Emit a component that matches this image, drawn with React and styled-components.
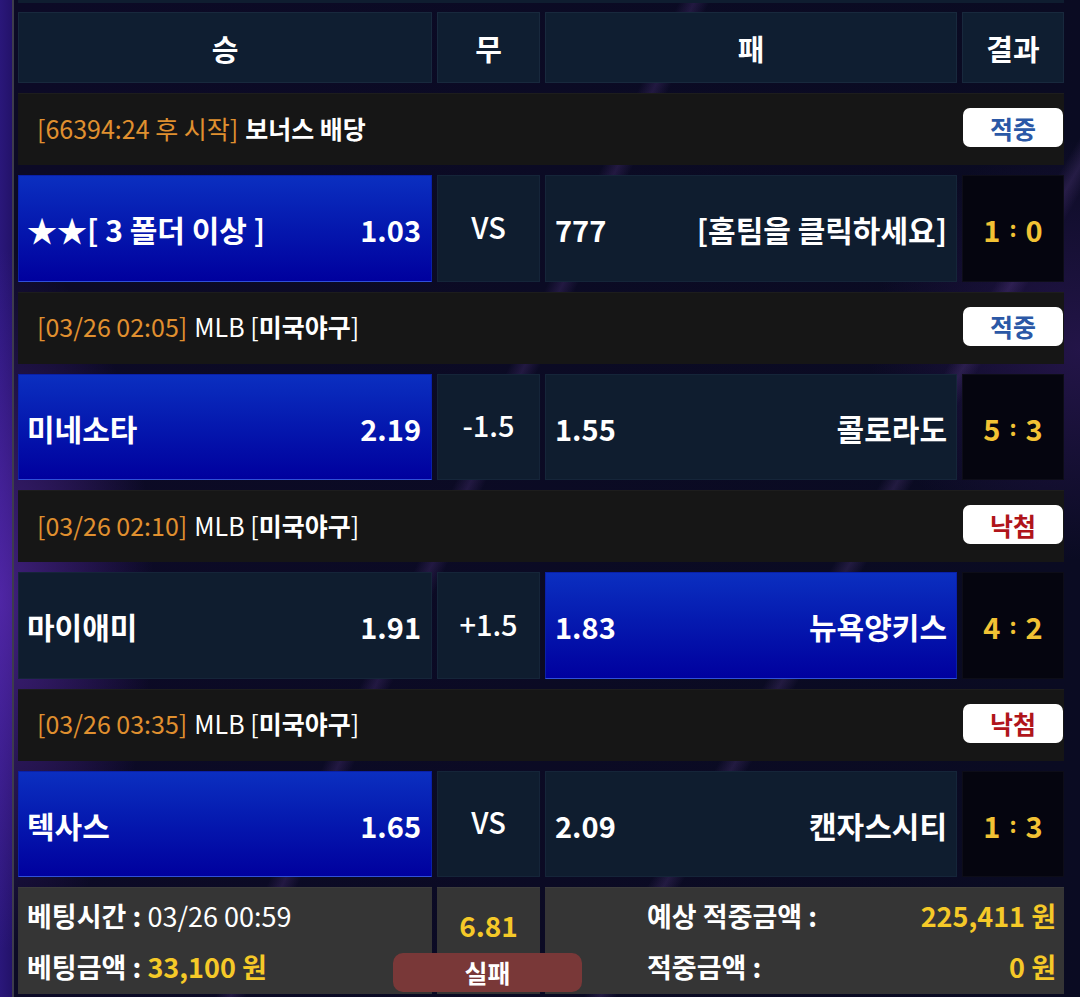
import React from "react";
import styled, { createGlobalStyle, css } from "styled-components";

const GlobalStyle = createGlobalStyle`
  html, body { margin: 0; padding: 0; background: #0a0a1e; }
  body { font-family: "Noto Sans CJK KR", "Noto Sans", sans-serif; }
  * { box-sizing: border-box; }
`;

const Page = styled.div`
  position: relative;
  width: 1080px;
  height: 997px;
  overflow: hidden;
  background:
    linear-gradient(115deg, transparent 0 44%, rgba(140, 90, 200, 0.18) 45%, transparent 46%),
    linear-gradient(120deg, transparent 0 70%, rgba(160, 110, 220, 0.16) 71%, transparent 72%),
    radial-gradient(ellipse 220px 500px at 0 600px, rgba(110, 50, 200, 0.55), transparent 70%),
    radial-gradient(ellipse 300px 300px at 1080px 350px, rgba(60, 30, 110, 0.5), transparent 70%),
    linear-gradient(to right, #2a177a 0, #23126a 12px, #0c0a26 12px, #0a0b22 100%);
`;

const Rail = styled.div`
  margin-left: 12px;
  border-left: 2px solid #3d3c4c;
  padding-left: 4px;
  width: 1052px;
  min-height: 997px;
  display: flex;
  flex-direction: column;
`;

const TopStrip = styled.div`
  height: 3px;
  background: #0f1d30;
  margin-bottom: 9px;
`;

const Table = styled.div`
  display: flex;
  flex-direction: column;
  gap: 10px;
`;

const Grid = styled.div`
  display: grid;
  grid-template-columns: 414px 103px 412px 102px;
  column-gap: 5px;
  height: ${(p) => p.$h}px;
`;

const HeadCell = styled.div`
  background: #0f1e31;
  border: 1px solid #18293d;
  display: flex;
  align-items: center;
  justify-content: center;
  color: #fff;
  font-weight: 700;
  font-size: 29px;
`;

const InfoRow = styled.div`
  height: 72px;
  background: #161616;
  border-top: 1px solid #1d1d1d;
  display: flex;
  align-items: center;
  justify-content: space-between;
  padding: 0 1px 4px 19px;
  font-size: 25px;
  color: #fff;
`;

const InfoText = styled.div`
  display: flex;
  align-items: center;
  gap: 7px;
  white-space: nowrap;
`;

const Orange = styled.span`
  color: #e0902f;
  font-weight: 400;
`;

const White = styled.span`
  color: #fff;
  font-weight: ${(p) => (p.$bold ? 700 : 400)};
`;

const Badge = styled.div`
  width: 100px;
  height: 39px;
  border-radius: 7px;
  background: #fff;
  display: flex;
  align-items: center;
  justify-content: center;
  font-weight: 700;
  font-size: 25px;
  color: ${(p) => (p.$win ? "#2b58a6" : "#b0151b")};
`;

const blueFill = css`
  background: linear-gradient(to bottom, #0b2fc0 0%, #051ab0 45%, #00009e 100%);
  border: 1px solid #0a20a8;
  border-bottom: 1px solid #3050d8;
`;

const navyFill = css`
  background: #0f1d2f;
  border: 1px solid #152539;
`;

const TeamCell = styled.div`
  ${(p) => (p.$picked ? blueFill : navyFill)}
  display: flex;
  align-items: center;
  justify-content: space-between;
  padding: 2px ${(p) => (p.$away ? 9 : 10)}px 0 ${(p) => (p.$away ? 9 : 8)}px;
  color: #fff;
  font-weight: 700;
  font-size: 30px;
  white-space: nowrap;
`;

const Odds = styled.span`
  font-weight: 600;
  font-size: 29px;
`;

const DrawCell = styled.div`
  ${navyFill}
  display: flex;
  align-items: center;
  justify-content: center;
  padding-bottom: 5px;
  color: #fff;
  font-weight: 500;
  font-size: 29px;
`;

const ScoreCell = styled.div`
  background: #05050f;
  border: 1px solid #0d0d18;
  display: flex;
  align-items: center;
  justify-content: center;
  padding-top: 2px;
  color: #f2c234;
  font-weight: 700;
  font-size: 29px;
  gap: 9px;
`;

const Colon = styled.span`
  font-size: 22px;
  font-weight: 700;
  position: relative;
  top: -2px;
`;

const Footer = styled.div`
  position: relative;
  display: grid;
  grid-template-columns: 414px 103px 412px 102px;
  column-gap: 5px;
  height: 107px;
`;

const Panel = styled.div`
  background: #353535;
  grid-column: ${(p) => p.$span || "auto"};
  border-top: 1px solid #3c3c3c;
`;

const LeftPanel = styled(Panel)`
  display: flex;
  flex-direction: column;
  justify-content: space-between;
  padding: 10px 0 9px 9px;
  font-size: 27px;
  color: #fff;
`;

const Line = styled.div`
  white-space: nowrap;
  line-height: 36px;
`;

const Label = styled.span`
  font-weight: 700;
`;

const Yellow = styled.span`
  color: #f5c928;
  font-weight: 700;
`;

const MidPanel = styled(Panel)`
  display: flex;
  justify-content: center;
  padding-top: 17px;
  font-size: 28px;
`;

const RightPanel = styled(Panel)`
  display: grid;
  grid-template-columns: 1fr auto;
  align-content: space-between;
  padding: 10px 8px 9px 102px;
  font-size: 27px;
  line-height: 36px;
  color: #fff;
`;

const RightValue = styled(Yellow)`
  text-align: right;
`;

const FailButton = styled.div`
  position: absolute;
  left: 375px;
  top: 66px;
  width: 189px;
  height: 39px;
  border-radius: 10px;
  background: #793838;
  display: flex;
  align-items: center;
  justify-content: center;
  color: #fff;
  font-weight: 700;
  font-size: 25px;
  padding-bottom: 2px;
`;

const matches = [
  {
    info: [
      <Orange key="a">[66394:24 후 시작]</Orange>,
      <White key="b" $bold>보너스 배당</White>,
    ],
    win: true,
    home: "★★[ 3 폴더 이상 ]",
    homeOdds: "1.03",
    draw: "VS",
    awayOdds: "777",
    away: "[홈팀을 클릭하세요]",
    pick: "home",
    score: ["1", "0"],
  },
  {
    time: "[03/26 02:05]",
    win: true,
    home: "미네소타",
    homeOdds: "2.19",
    draw: "-1.5",
    awayOdds: "1.55",
    away: "콜로라도",
    pick: "home",
    score: ["5", "3"],
  },
  {
    time: "[03/26 02:10]",
    win: false,
    home: "마이애미",
    homeOdds: "1.91",
    draw: "+1.5",
    awayOdds: "1.83",
    away: "뉴욕양키스",
    pick: "away",
    score: ["4", "2"],
  },
  {
    time: "[03/26 03:35]",
    win: false,
    home: "텍사스",
    homeOdds: "1.65",
    draw: "VS",
    awayOdds: "2.09",
    away: "캔자스시티",
    pick: "home",
    score: ["1", "3"],
  },
];

function LeagueInfo({ time }) {
  return (
    <>
      <Orange>{time}</Orange>
      <White>
        MLB [<White $bold>미국야구</White>]
      </White>
    </>
  );
}

export default function App() {
  return (
    <>
      <GlobalStyle />
      <Page>
        <Rail>
          <TopStrip />
          <Table>
            <Grid $h={71}>
              <HeadCell>승</HeadCell>
              <HeadCell>무</HeadCell>
              <HeadCell>패</HeadCell>
              <HeadCell>결과</HeadCell>
            </Grid>
            {matches.map((m, i) => (
              <React.Fragment key={i}>
                <InfoRow>
                  <InfoText>{m.info ? m.info : <LeagueInfo time={m.time} />}</InfoText>
                  <Badge $win={m.win}>{m.win ? "적중" : "낙첨"}</Badge>
                </InfoRow>
                <Grid $h={106.5}>
                  <TeamCell $picked={m.pick === "home"}>
                    <span>{m.home}</span>
                    <Odds>{m.homeOdds}</Odds>
                  </TeamCell>
                  <DrawCell>{m.draw}</DrawCell>
                  <TeamCell $away $picked={m.pick === "away"}>
                    <Odds>{m.awayOdds}</Odds>
                    <span>{m.away}</span>
                  </TeamCell>
                  <ScoreCell>
                    <span>{m.score[0]}</span>
                    <Colon>:</Colon>
                    <span>{m.score[1]}</span>
                  </ScoreCell>
                </Grid>
              </React.Fragment>
            ))}
            <Footer>
              <LeftPanel>
                <Line>
                  <Label>베팅시간 : </Label>03/26 00:59
                </Line>
                <Line>
                  <Label>베팅금액 : </Label>
                  <Yellow>33,100 원</Yellow>
                </Line>
              </LeftPanel>
              <MidPanel>
                <Yellow>6.81</Yellow>
              </MidPanel>
              <RightPanel $span="span 2">
                <Label>예상 적중금액 :</Label>
                <RightValue>225,411 원</RightValue>
                <Label>적중금액 :</Label>
                <RightValue>0 원</RightValue>
              </RightPanel>
              <FailButton>실패</FailButton>
            </Footer>
          </Table>
        </Rail>
      </Page>
    </>
  );
}
